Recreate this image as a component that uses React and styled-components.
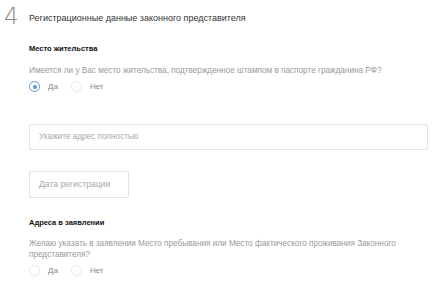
import React from "react";
import styled, { createGlobalStyle } from "styled-components";

const Global = createGlobalStyle`
  html, body { margin: 0; padding: 0; background: #fff; }
  body { font-family: "Liberation Sans", Arial, sans-serif; }
`;

const Page = styled.div`
  width: 434px;
  height: 283px;
  overflow: hidden;
  background: #fff;
  box-sizing: border-box;
  padding: 2px 6px 0 4px;
`;

const Header = styled.div`
  display: flex;
  align-items: center;
  height: 30px;
`;

const StepNum = styled.div`
  width: 25px;
  font-family: "DejaVu Sans", sans-serif;
  font-weight: 200;
  font-size: 23px;
  color: #8a8a8a;
  line-height: 1;
  margin-top: -2px;
`;

const Title = styled.div`
  font-size: 9px;
  color: #333;
  margin-top: 2px;
`;

const Body = styled.div`
  padding-left: 25px;
  display: flex;
  flex-direction: column;
`;

const SectionTitle = styled.div`
  font-size: 7.5px;
  font-weight: bold;
  color: #111;
  margin-top: ${(p) => p.$mt}px;
`;

const Question = styled.div`
  font-size: 8.2px;
  line-height: 11.5px;
  color: #9a9a9a;
  margin-top: ${(p) => p.$mt}px;
  max-width: 372px;
`;

const RadioRow = styled.div`
  display: flex;
  align-items: center;
  gap: 13px;
  margin-top: 3px;
  height: 14px;
`;

const RadioItem = styled.label`
  display: flex;
  align-items: center;
  gap: 8px;
  font-size: 8px;
  color: #888;
`;

const Circle = styled.span`
  width: 9px;
  height: 9px;
  border-radius: 50%;
  border: 1px solid ${(p) => (p.$on ? "#5b95d8" : "#e6e6e6")};
  display: flex;
  align-items: center;
  justify-content: center;
  box-sizing: content-box;
  &::after {
    content: "";
    width: 4px;
    height: 4px;
    border-radius: 50%;
    background: ${(p) => (p.$on ? "#5b95d8" : "transparent")};
  }
`;

const Input = styled.div`
  margin-top: 30px;
  height: 26px;
  width: 399px;
  border: 1px solid #e2e2e2;
  border-radius: 2px;
  display: flex;
  align-items: center;
  padding-left: 9px;
  box-sizing: border-box;
  font-size: 8.2px;
  color: #a9a9a9;
`;

const DateBox = styled(Input)`
  margin-top: 21px;
  width: 100px;
  height: 27px;
  font-size: 8.6px;
`;

function Radio({ on, label }) {
  return (
    <RadioItem>
      <Circle $on={on} />
      {label}
    </RadioItem>
  );
}

export default function App() {
  return (
    <>
      <Global />
      <Page>
        <Header>
          <StepNum>4</StepNum>
          <Title>Регистрационные данные законного представителя</Title>
        </Header>
        <Body>
          <SectionTitle $mt={12}>Место жительства</SectionTitle>
          <Question $mt={12}>
            Имеется ли у Вас место жительства, подтвержденное штампом в паспорте гражданина РФ?
          </Question>
          <RadioRow>
            <Radio on label="Да" />
            <Radio label="Нет" />
          </RadioRow>
          <Input>Укажите адрес полностью</Input>
          <DateBox>Дата регистрации</DateBox>
          <SectionTitle $mt={20}>Адреса в заявлении</SectionTitle>
          <Question $mt={11}>
            Желаю указать в заявлении Место пребывания или Место фактического проживания Законного представителя?
          </Question>
          <RadioRow>
            <Radio label="Да" />
            <Radio label="Нет" />
          </RadioRow>
        </Body>
      </Page>
    </>
  );
}
